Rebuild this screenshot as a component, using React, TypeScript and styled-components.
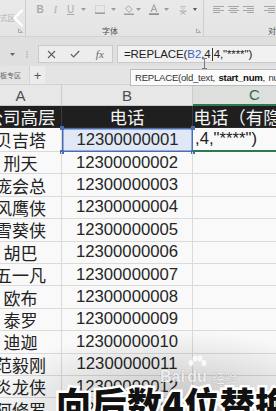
import React from "react";
import styled, { createGlobalStyle } from "styled-components";

const CJK = `"Noto Sans CJK SC", "Liberation Sans", sans-serif`;
const SANS = `"Liberation Sans", "Noto Sans CJK SC", sans-serif`;

const GlobalStyle = createGlobalStyle`
  html, body { margin: 0; padding: 0; background: #f8f8f8; }
  body { font-family: ${SANS}; }
  #root { width: 276px; height: 411px; }
`;

const Screen = styled.div`
  position: relative;
  width: 276px;
  height: 411px;
  overflow: hidden;
  background: #f9f9f9;
  display: flex;
  flex-direction: column;
`;

/* ---------- Ribbon ---------- */
const Ribbon = styled.div`
  flex: none;
  height: 37px;
  box-sizing: border-box;
  display: grid;
  grid-template-columns: 26px 178px 1fr;
  background: linear-gradient(#e9e9e9, #e4e4e4);
  border-bottom: 1px solid #d3d3d3;
`;

const Group = styled.div<{ $divider?: boolean }>`
  min-width: 0;
  overflow: hidden;
  box-sizing: border-box;
  display: flex;
  flex-direction: column;
  justify-content: space-between;
  padding: 4px 0 1px;
  border-right: ${(p) => (p.$divider ? "1px solid #cdcdcd" : "none")};
`;

const IconRow = styled.div`
  display: flex;
  align-items: center;
  height: 11px;
`;

const Tool = styled.div<{ $w: number; $ml: number }>`
  flex: none;
  width: ${(p) => p.$w}px;
  margin-left: ${(p) => p.$ml}px;
  height: 11px;
  display: flex;
  align-items: center;
  justify-content: center;
  color: #a9a9a9;
  font-size: 10px;
  line-height: 1;
`;

const BoldGlyph = styled.span`
  font: bold 10px ${SANS};
`;
const ItalicGlyph = styled.span`
  font: italic 10px "Liberation Serif", serif;
`;
const UnderGlyph = styled.span`
  font: 10px ${SANS};
  text-decoration: underline;
`;

const FadedText = styled.div`
  margin-top: 8px;
  font: 7.5px ${CJK};
  color: #b3b3b3;
  white-space: nowrap;
`;

const LabelRow = styled.div`
  display: flex;
  align-items: center;
  height: 9px;
`;

const GroupLabel = styled.span<{ $ml: number }>`
  margin-left: ${(p) => p.$ml}px;
  font: 8px ${CJK};
  color: #4f4f4f;
  white-space: nowrap;
`;

const Launcher = styled.svg`
  margin-left: auto;
  margin-right: 2px;
  flex: none;
`;

/* ---------- Formula bar ---------- */
const FormulaBar = styled.div`
  flex: none;
  height: 29px;
  box-sizing: border-box;
  display: flex;
  align-items: flex-end;
  padding-bottom: 3px;
  background: #dfdfdf;
`;

const NameArrow = styled.div`
  width: 24px;
  height: 18px;
  display: flex;
  align-items: center;
  justify-content: center;
`;

const Grip = styled.div`
  width: 6px;
  height: 18px;
  display: flex;
  align-items: center;
  justify-content: center;
`;

const ButtonBox = styled.div`
  margin-left: 8px;
  width: 75px;
  height: 18px;
  box-sizing: border-box;
  border: 1px solid #cacaca;
  background: #ededed;
  display: grid;
  grid-template-columns: repeat(3, 1fr);
  align-items: center;
  justify-items: center;
`;

const FxText = styled.span`
  font: italic 11px "Liberation Serif", serif;
  color: #666;
`;

const FormulaInput = styled.div`
  flex: 1;
  margin-left: 4px;
  margin-right: -4px;
  height: 18px;
  box-sizing: border-box;
  border: 1px solid #cacaca;
  background: #f1f1f1;
  padding-left: 6px;
  display: flex;
  align-items: center;
  font: 11.5px ${SANS};
  letter-spacing: -0.1px;
  color: #222;
  white-space: nowrap;
`;

const RefText = styled.span`
  color: #3f63b8;
`;

const Caret = styled.span`
  display: inline-block;
  width: 1px;
  height: 13px;
  margin: 0 1px;
  background: #333;
`;

/* ---------- Tab row ---------- */
const TabRow = styled.div`
  flex: none;
  height: 19px;
  box-sizing: border-box;
  display: flex;
  align-items: stretch;
  background: #e4e4e4;
  border-bottom: 1px solid #d2d2d2;
`;

const SheetTab = styled.div`
  width: 30px;
  box-sizing: border-box;
  padding-right: 8px;
  display: flex;
  align-items: center;
  justify-content: flex-end;
  font: 7px ${CJK};
  color: #666;
  white-space: nowrap;
  overflow: hidden;
  border-right: 1px solid #d3d3d3;
`;

const AddTab = styled.div`
  width: 15px;
  display: flex;
  align-items: center;
  justify-content: center;
  font: 13px ${SANS};
  color: #555;
  background: #ececec;
`;

/* ---------- Sheet ---------- */
const Sheet = styled.div`
  flex: none;
  margin-left: -20px;
  width: 337px;
  display: grid;
  grid-template-columns: 82px 131px 124px;
  grid-template-rows: 21px 22px 24px;
  grid-auto-rows: 22.4px;
`;

const Cell = styled.div`
  position: relative;
  box-sizing: border-box;
  border-right: 1px solid #dadada;
  border-bottom: 1px solid #dadada;
  display: flex;
  align-items: center;
  justify-content: center;
  white-space: nowrap;
  overflow: visible;
`;

const ColHead = styled(Cell)<{ $active?: boolean }>`
  background: ${(p) => (p.$active ? "#dcdfdc" : "#e7e7e7")};
  border-right-color: #cbcbcb;
  border-bottom: ${(p) => (p.$active ? "2px solid #2f7a4c" : "1px solid #c9c9c9")};
  color: ${(p) => (p.$active ? "#2f6a46" : "#4d4d4d")};
  font: 15px ${SANS};
`;

const TitleCell = styled(Cell)`
  background: #1f1f1f;
  border-right-color: #3a3a3a;
  border-bottom-color: #2a2a2a;
  color: #f4f4f4;
  font: 17.5px ${CJK};
  overflow: hidden;
`;

const NameCell = styled(Cell)`
  font: 17px ${CJK};
  color: #222;
`;

const NumCell = styled(Cell)`
  font: 16.7px ${SANS};
  color: #262626;
`;

const RefCell = styled(NumCell)`
  background: #e1e8f5;
  border: none;
  box-shadow: inset 0 0 0 1.5px #4a6cb5;
`;

const Handle = styled.span<{ $top: boolean; $left: boolean }>`
  position: absolute;
  width: 4px;
  height: 4px;
  background: #4a6cb5;
  ${(p) => (p.$top ? "top: -2px;" : "bottom: -2px;")}
  ${(p) => (p.$left ? "left: -2px;" : "right: -2px;")}
`;

const EditCell = styled(Cell)`
  justify-content: flex-start;
  padding-left: 2px;
  font: 16.7px ${SANS};
  color: #222;
  border-bottom: 2px solid #2f7a4c;
`;

/* ---------- Overlays ---------- */
const BackChevron = styled.svg`
  position: absolute;
  left: 12px;
  top: 9px;
`;

const IBeam = styled.svg`
  position: absolute;
  left: 201px;
  top: 58px;
`;

const Tooltip = styled.div`
  position: absolute;
  left: 130px;
  top: 69px;
  width: 170px;
  height: 17px;
  box-sizing: border-box;
  border: 1px solid #bcbcbc;
  background: #fbfbfb;
  padding-left: 4px;
  display: flex;
  align-items: center;
  font: 9.6px ${SANS};
  letter-spacing: -0.25px;
  word-spacing: 1px;
  color: #333;
  white-space: pre;
`;

const Strong = styled.b`
  color: #111;
`;

const Shade = styled.div`
  position: absolute;
  inset: 0;
  pointer-events: none;
  background: radial-gradient(ellipse 190px 75px at 175px 405px, rgba(0, 0, 0, 0.22), rgba(0, 0, 0, 0) 100%);
`;

const Watermark = styled.div`
  position: absolute;
  left: 160px;
  top: 355px;
  display: flex;
  align-items: flex-end;
  color: rgba(255, 255, 255, 0.85);
  text-shadow: 0 0 1px rgba(0, 0, 0, 0.35);
  white-space: nowrap;
`;

const WmLatin = styled.span`
  font: bold 16px ${SANS};
  line-height: 16px;
`;

const PawBox = styled.div`
  display: flex;
  flex-direction: column;
  align-items: center;
  width: 24px;
`;

const WmCjk = styled.span`
  margin-left: 3px;
  font: 12.5px ${CJK};
  line-height: 15px;
`;

const Subtitle = styled.div`
  position: absolute;
  left: 56px;
  top: 385px;
  font-family: ${CJK};
  font-weight: 900;
  font-size: 35px;
  line-height: 1;
  letter-spacing: 0.5px;
  color: #111;
  white-space: nowrap;
  -webkit-text-stroke: 5px #fff;
  paint-order: stroke fill;
`;

/* ---------- Small drawings ---------- */
const Tri = () => (
  <svg width="5" height="3" viewBox="0 0 5 3">
    <path d="M0 0h5L2.5 3z" fill="#9c9c9c" />
  </svg>
);

const LauncherIcon = () => (
  <Launcher width="5" height="5" viewBox="0 0 5 5">
    <path d="M0.5 0.5v4h4" fill="none" stroke="#9a9a9a" strokeWidth="0.8" />
    <path d="M1.5 1.5l3 3" stroke="#9a9a9a" strokeWidth="0.8" />
  </Launcher>
);

const AlignIcon = ({ mode }: { mode: "l" | "c" | "r" | "i" }) => {
  const lens = [11, 7, 11, 7];
  return (
    <svg width="11" height="8" viewBox="0 0 11 8">
      {lens.map((len, i) => {
        let x = 0;
        if (mode === "c") x = (11 - len) / 2;
        if (mode === "r") x = 11 - len;
        if (mode === "i") x = i % 2 ? 4 : 0;
        return <rect key={i} x={x} y={i * 2} width={mode === "i" && i % 2 ? 7 : len} height="1" fill="#a6a6a6" />;
      })}
    </svg>
  );
};

const names = ["刑天", "庞会总", "风鹰侠", "雪葵侠", "胡巴", "五一凡", "欧布", "泰罗", "迪迦", "范毅刚", "炎龙侠", "阿修罗"];

export default function App() {
  return (
    <>
      <GlobalStyle />
      <Screen>
        <Ribbon>
          <Group $divider>
            <FadedText>式区</FadedText>
            <LabelRow>
              <LauncherIcon />
            </LabelRow>
          </Group>
          <Group $divider>
            <IconRow>
              <Tool $w={10} $ml={9}><BoldGlyph>B</BoldGlyph></Tool>
              <Tool $w={10} $ml={5.5}><ItalicGlyph>I</ItalicGlyph></Tool>
              <Tool $w={10} $ml={5}><UnderGlyph>U</UnderGlyph></Tool>
              <Tool $w={6} $ml={4.5}><Tri /></Tool>
              <Tool $w={12} $ml={8}>
                <svg width="10" height="9" viewBox="0 0 10 9">
                  <rect x="0.5" y="0.5" width="9" height="7" fill="none" stroke="#b9b9b9" strokeWidth="0.8" strokeDasharray="1 1" />
                  <rect x="0" y="7.5" width="10" height="1.5" fill="#a0a0a0" />
                </svg>
              </Tool>
              <Tool $w={6} $ml={4}><Tri /></Tool>
              <Tool $w={12} $ml={7}>
                <svg width="10" height="10" viewBox="0 0 10 10">
                  <path d="M4.5 0.8l3.6 3.6-3 3-3.6-3.6z" fill="none" stroke="#a3a3a3" strokeWidth="1" />
                  <rect x="0" y="8.5" width="10" height="1.5" fill="#9d9d9d" />
                </svg>
              </Tool>
              <Tool $w={6} $ml={0}><Tri /></Tool>
              <Tool $w={12} $ml={7}>
                <svg width="10" height="11" viewBox="0 0 10 11">
                  <path d="M2 8L5 0.8 8 8M3.2 5.5h3.6" fill="none" stroke="#a3a3a3" strokeWidth="1.1" />
                  <rect x="0" y="9.3" width="10" height="1.7" fill="#8f8f8f" />
                </svg>
              </Tool>
              <Tool $w={6} $ml={3}><Tri /></Tool>
              <Tool $w={12} $ml={8}>
                <svg width="10" height="10" viewBox="0 0 10 10">
                  <path d="M2 1.5h6M3 3h4" stroke="#bdbdbd" strokeWidth="0.8" />
                  <path d="M5 4.5v1M1.5 6h7M2.5 6l5 3.5M7.5 6l-5 3.5" stroke="#ababab" strokeWidth="0.9" fill="none" />
                </svg>
              </Tool>
              <Tool $w={6} $ml={3}>
                <svg width="4" height="3" viewBox="0 0 4 3"><path d="M0 0h4L2 3z" fill="#555" /></svg>
              </Tool>
            </IconRow>
            <LabelRow>
              <GroupLabel $ml={76}>字体</GroupLabel>
              <LauncherIcon />
            </LabelRow>
          </Group>
          <Group>
            <IconRow>
              <Tool $w={11} $ml={9}><AlignIcon mode="l" /></Tool>
              <Tool $w={11} $ml={4}><AlignIcon mode="c" /></Tool>
              <Tool $w={11} $ml={4}><AlignIcon mode="r" /></Tool>
              <Tool $w={11} $ml={10}><AlignIcon mode="i" /></Tool>
            </IconRow>
            <LabelRow>
              <GroupLabel $ml={64}>对齐方式</GroupLabel>
            </LabelRow>
          </Group>
        </Ribbon>

        <FormulaBar>
          <NameArrow>
            <svg width="5" height="3" viewBox="0 0 5 3"><path d="M0 0h5L2.5 3z" fill="#666" /></svg>
          </NameArrow>
          <Grip>
            <svg width="2" height="7" viewBox="0 0 2 7">
              <circle cx="1" cy="1" r="0.7" fill="#9a9a9a" />
              <circle cx="1" cy="3.5" r="0.7" fill="#9a9a9a" />
              <circle cx="1" cy="6" r="0.7" fill="#9a9a9a" />
            </svg>
          </Grip>
          <ButtonBox>
            <svg width="9" height="9" viewBox="0 0 9 9">
              <path d="M1 1l7 7M8 1l-7 7" stroke="#5e5e5e" strokeWidth="1.1" />
            </svg>
            <svg width="10" height="8" viewBox="0 0 10 8">
              <path d="M0.8 4.2l2.8 2.8L9.2 1" fill="none" stroke="#5e5e5e" strokeWidth="1.2" />
            </svg>
            <FxText>fx</FxText>
          </ButtonBox>
          <FormulaInput>
            =REPLACE(<RefText>B2</RefText>,4<Caret />4,"****")
          </FormulaInput>
        </FormulaBar>

        <TabRow>
          <SheetTab>模板专区</SheetTab>
          <AddTab>+</AddTab>
        </TabRow>

        <Sheet>
          <ColHead>A</ColHead>
          <ColHead>B</ColHead>
          <ColHead $active>C</ColHead>

          <TitleCell>公司高层</TitleCell>
          <TitleCell>电话</TitleCell>
          <TitleCell>电话（有隐藏）</TitleCell>

          <NameCell>贝吉塔</NameCell>
          <RefCell>
            12300000001
            <Handle $top $left />
            <Handle $top $left={false} />
            <Handle $top={false} $left />
            <Handle $top={false} $left={false} />
          </RefCell>
          <EditCell>,4,"****")</EditCell>

          {names.map((n, i) => (
            <React.Fragment key={n}>
              <NameCell>{n}</NameCell>
              <NumCell>{`123000000${String(i + 2).padStart(2, "0")}`}</NumCell>
              <Cell />
            </React.Fragment>
          ))}
        </Sheet>

        <BackChevron width="12" height="18" viewBox="0 0 12 18">
          <polyline points="10,1.5 2.5,9 10,16.5" fill="none" stroke="#fff" strokeWidth="2.2" strokeLinecap="round" strokeLinejoin="round" />
        </BackChevron>

        <IBeam width="7" height="11" viewBox="0 0 7 11">
          <path d="M1 0.5h5M3.5 0.5v10M1 10.5h5" stroke="#7a7a7a" strokeWidth="1" fill="none" />
        </IBeam>

        <Tooltip>
          REPLACE(old_text, <Strong>start_num</Strong>, num_chars, new_text)
        </Tooltip>

        <Shade />

        <Watermark>
          <WmLatin>Bai</WmLatin>
          <PawBox>
            <svg width="20" height="14" viewBox="0 0 20 14">
              <ellipse cx="4" cy="8" rx="2.4" ry="3" fill="rgba(255,255,255,0.8)" />
              <ellipse cx="8" cy="3.5" rx="2.4" ry="3" fill="rgba(255,255,255,0.8)" />
              <ellipse cx="13" cy="3.5" rx="2.4" ry="3" fill="rgba(255,255,255,0.8)" />
              <ellipse cx="17" cy="8" rx="2.4" ry="3" fill="rgba(255,255,255,0.8)" />
            </svg>
            <WmLatin>du</WmLatin>
          </PawBox>
          <WmCjk>经验</WmCjk>
        </Watermark>

        <Subtitle>向后数4位替换</Subtitle>
      </Screen>
    </>
  );
}
